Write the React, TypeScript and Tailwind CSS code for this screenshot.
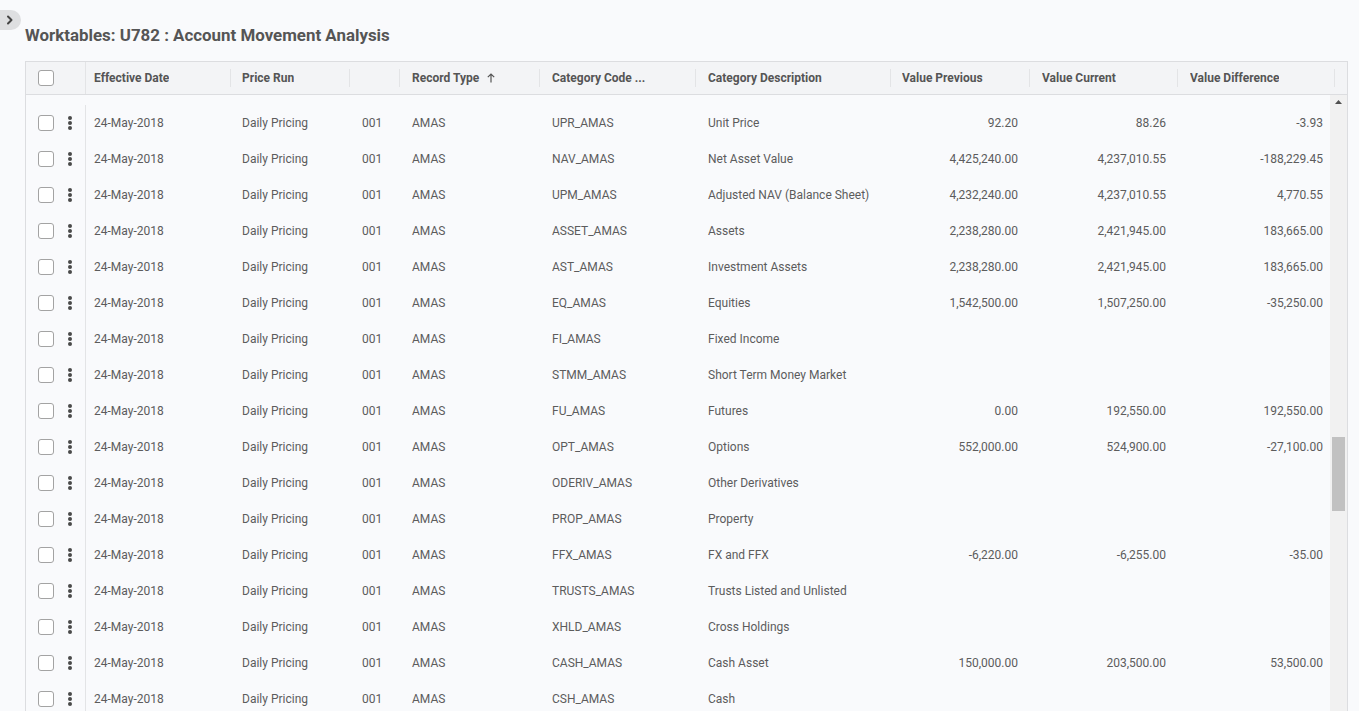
import React from "react";

type Row = [string, string, string, string, string];
const rows: Row[] = [
  ["UPR_AMAS", "Unit Price", "92.20", "88.26", "-3.93"],
  ["NAV_AMAS", "Net Asset Value", "4,425,240.00", "4,237,010.55", "-188,229.45"],
  ["UPM_AMAS", "Adjusted NAV (Balance Sheet)", "4,232,240.00", "4,237,010.55", "4,770.55"],
  ["ASSET_AMAS", "Assets", "2,238,280.00", "2,421,945.00", "183,665.00"],
  ["AST_AMAS", "Investment Assets", "2,238,280.00", "2,421,945.00", "183,665.00"],
  ["EQ_AMAS", "Equities", "1,542,500.00", "1,507,250.00", "-35,250.00"],
  ["FI_AMAS", "Fixed Income", "", "", ""],
  ["STMM_AMAS", "Short Term Money Market", "", "", ""],
  ["FU_AMAS", "Futures", "0.00", "192,550.00", "192,550.00"],
  ["OPT_AMAS", "Options", "552,000.00", "524,900.00", "-27,100.00"],
  ["ODERIV_AMAS", "Other Derivatives", "", "", ""],
  ["PROP_AMAS", "Property", "", "", ""],
  ["FFX_AMAS", "FX and FFX", "-6,220.00", "-6,255.00", "-35.00"],
  ["TRUSTS_AMAS", "Trusts Listed and Unlisted", "", "", ""],
  ["XHLD_AMAS", "Cross Holdings", "", "", ""],
  ["CASH_AMAS", "Cash Asset", "150,000.00", "203,500.00", "53,500.00"],
  ["CSH_AMAS", "Cash", "", "", ""],
];

function Checkbox() {
  return <div className="w-[16px] h-[16px] rounded-[3px] border border-[#a3a3a3] bg-white" />;
}

function Kebab() {
  return (
    <div className="flex flex-col gap-[1.5px] items-center w-[4px]">
      <div className="w-[3.5px] h-[3.5px] rounded-full bg-[#4a4a4a]" />
      <div className="w-[3.5px] h-[3.5px] rounded-full bg-[#4a4a4a]" />
      <div className="w-[3.5px] h-[3.5px] rounded-full bg-[#4a4a4a]" />
    </div>
  );
}

function HeadCell({ w, children, divider = true }: { w: string; children?: React.ReactNode; divider?: boolean }) {
  return (
    <div className={`${w} relative flex items-center h-full shrink-0`}>
      <span className="truncate flex items-center">{children}</span>
      {divider && <div className="absolute right-0 top-[7px] bottom-[7px] w-px bg-[#e3e4e6]" />}
    </div>
  );
}

export default function App() {
  return (
    <div
      className="w-[1359px] h-[711px] overflow-hidden bg-[#f9fafc] relative text-[#5c5c5c]"
      style={{ fontFamily: "Roboto, 'Liberation Sans', sans-serif" }}
    >
      <div className="absolute left-0 top-[10px] w-[21px] h-[20px] rounded-r-[10px] bg-[#dedfe1] flex items-center justify-center">
        <svg width="10" height="10" viewBox="0 0 10 10" className="ml-[-2px]">
          <path d="M3 1.5 L6.5 5 L3 8.5" stroke="#444" strokeWidth="2" fill="none" strokeLinecap="round" strokeLinejoin="round" />
        </svg>
      </div>

      <div className="pl-[25px] pt-[24px]">
        <h1 className="text-[16.9px] font-bold text-[#555] leading-[20px] mt-[1px]">Worktables: U782 : Account Movement Analysis</h1>

        <div className="mt-[16px] w-[1323px] border border-[#dcdde0] bg-[#f9fafc]">
          {/* header */}
          <div className="flex h-[33px] bg-[#f3f4f6] border-b border-[#dcdde0] text-[12px] font-bold text-[#555]">
            <div className="w-[60px] h-full flex items-center pl-[12px] border-r border-[#e3e4e6] shrink-0">
              <Checkbox />
            </div>
            <HeadCell w="w-[145px] pl-[8px]">Effective Date</HeadCell>
            <HeadCell w="w-[119px] pl-[11px]">Price Run</HeadCell>
            <HeadCell w="w-[50px] pl-[12px]"></HeadCell>
            <HeadCell w="w-[140px] pl-[12px]">
              Record Type
              <svg width="8" height="10" viewBox="0 0 8 10" className="ml-[8px]">
                <path d="M4 9.5 V1 M0.8 4.2 L4 1 L7.2 4.2" stroke="#555" strokeWidth="1.2" fill="none" />
              </svg>
            </HeadCell>
            <HeadCell w="w-[156px] pl-[12px]">Category Code ...</HeadCell>
            <HeadCell w="w-[195px] pl-[12px]">Category Description</HeadCell>
            <HeadCell w="w-[139px] pl-[11px]">Value Previous</HeadCell>
            <HeadCell w="w-[148px] pl-[12px]">Value Current</HeadCell>
            <HeadCell w="w-[157px] pl-[12px]">Value Difference</HeadCell>
          </div>

          {/* body */}
          <div className="flex">
            <div className="flex-1 pt-[10px] text-[12px]">
              {rows.map((r, i) => (
                <div key={i} className="flex h-[36px] items-center">
                  <div className="w-[60px] h-full flex items-center pl-[12px] gap-[14px] border-r border-[#e3e4e6] shrink-0">
                    <Checkbox />
                    <Kebab />
                  </div>
                  <div className="w-[145px] pl-[8px] shrink-0">24-May-2018</div>
                  <div className="w-[119px] pl-[11px] shrink-0">Daily Pricing</div>
                  <div className="w-[50px] pl-[12px] shrink-0">001</div>
                  <div className="w-[140px] pl-[12px] shrink-0">AMAS</div>
                  <div className="w-[156px] pl-[12px] shrink-0">{r[0]}</div>
                  <div className="w-[195px] pl-[12px] shrink-0">{r[1]}</div>
                  <div className="w-[139px] pr-[12px] text-right shrink-0">{r[2]}</div>
                  <div className="w-[148px] pr-[12px] text-right shrink-0">{r[3]}</div>
                  <div className="w-[152px] pr-[7px] text-right shrink-0">{r[4]}</div>
                </div>
              ))}
            </div>
            {/* scrollbar */}
            <div className="w-[17px] shrink-0 bg-[#f1f1f1] relative">
              <div className="flex justify-center pt-[5px]">
                <svg width="7" height="4" viewBox="0 0 7 4">
                  <path d="M0 4 L3.5 0 L7 4 Z" fill="#505050" />
                </svg>
              </div>
              <div className="absolute left-[2px] top-[342px] w-[13px] h-[74px] bg-[#c1c1c1]" />
            </div>
          </div>
        </div>
      </div>
    </div>
  );
}
